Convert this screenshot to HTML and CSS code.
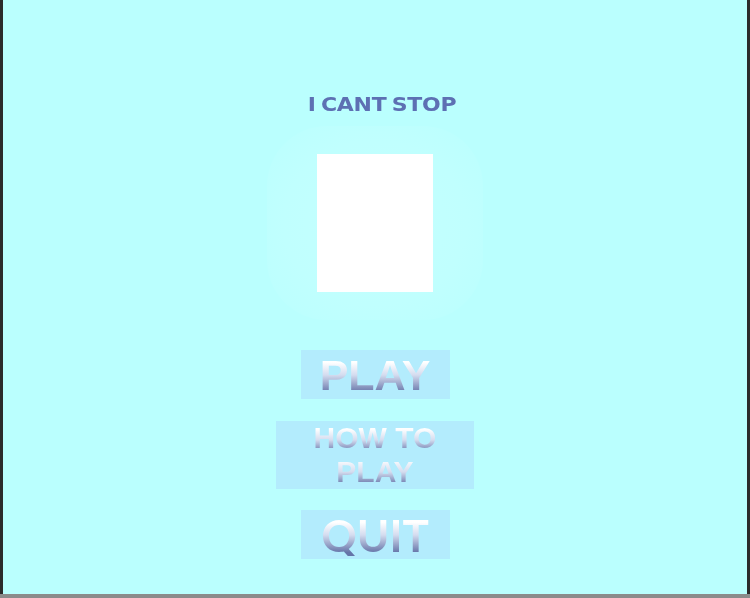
FILE: index.html
```html
<!DOCTYPE html>
<html>
<head>
<meta charset="utf-8">
<link rel="stylesheet" href="styles.css">
</head>
<body>
<div class="window">
  <div class="screen">
    <h1 class="title">I CANT STOP</h1>
    <div class="glow"><div class="picture"></div></div>
    <div class="menu">
      <div class="btn btn-play"><span class="label">PLAY</span></div>
      <div class="btn btn-how"><span class="label">HOW TO<br>PLAY</span></div>
      <div class="btn btn-quit"><span class="label quit">QUIT</span></div>
    </div>
  </div>
  <div class="statusbar"></div>
</div>
</body>
</html>
```
FILE: styles.css
```css
html, body { margin: 0; padding: 0; }
body { width: 750px; height: 598px; overflow: hidden; background: #2b2b2b; }
.window { display: flex; flex-direction: column; width: 750px; height: 598px; }
.screen {
  flex: 1;
  margin: 0 3px 0 3px;
  background: #bafffe;
  display: flex; flex-direction: column; align-items: center;
}
.statusbar { height: 4px; background: #8b8b8b; }
.title {
  margin: 94px 0 0 14px;
  font-family: "DejaVu Sans", sans-serif;
  font-weight: bold;
  font-size: 22px;
  letter-spacing: -0.3px;
  word-spacing: -2px;
  color: #5d70b3;
  line-height: 22px;
  transform: scaleY(0.9);
}
.glow {
  margin-top: 10px;
  padding: 28px 50px;
  border-radius: 60px;
  background: radial-gradient(ellipse at center, #c4fffe 0%, #c0fffe 60%, rgba(190,255,254,0) 100%);
}
.picture { width: 116px; height: 138px; background: #ffffff; }
.menu { display: flex; flex-direction: column; align-items: center; gap: 22px; margin-top: 30px; }
.btn {
  background: #b3ecfd;
  display: flex; align-items: center; justify-content: center;
  text-align: center;
}
.btn-play, .btn-quit { width: 149px; height: 49px; }
.btn-how { width: 198px; height: 68px; margin: 0 0 -1px 0; }
.label {
  font-family: "Liberation Sans", Arial, sans-serif;
  font-weight: bold;
  font-size: 43px;
  line-height: 42px;
  background: linear-gradient(to bottom, #ffffff 20%, #d4dcef 50%, #6574a8 92%);
  -webkit-background-clip: text;
  background-clip: text;
  color: transparent;
}
.btn-how .label {
  font-size: 30px; line-height: 34px;
  background: linear-gradient(to bottom, #ffffff 12%, #d4dcef 28%, #6574a8 46%, #ffffff 56%, #d4dcef 75%, #6574a8 94%);
  -webkit-background-clip: text; background-clip: text;
}
.quit { font-family: "Lato", "Open Sans", sans-serif; font-weight: bold; font-size: 44px; }
```
